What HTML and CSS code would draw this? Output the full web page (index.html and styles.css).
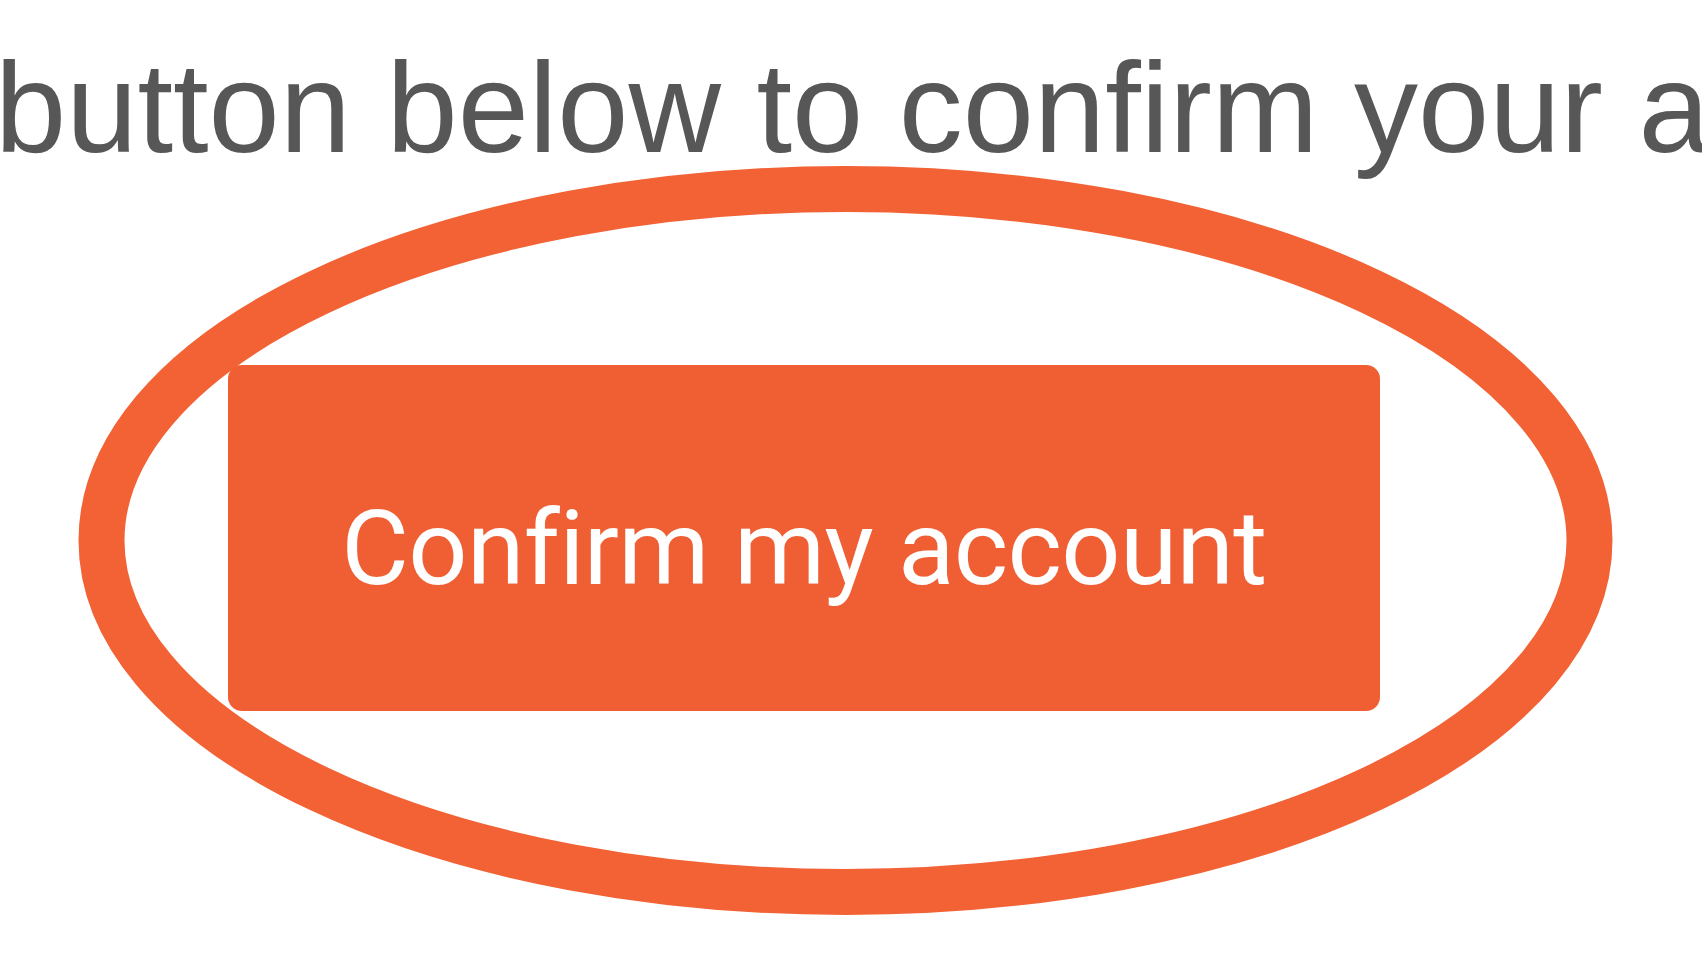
FILE: index.html
```html
<!DOCTYPE html>
<html lang="en">
<head>
<meta charset="utf-8">
<title>Confirm my account</title>
<link rel="stylesheet" href="styles.css">
</head>
<body>
<main class="page">
  <p class="lead">button below to confirm your account</p>
  <a class="confirm-btn" href="#">Confirm my account</a>
  <svg class="highlight" width="1702" height="960" viewBox="0 0 1702 960" aria-hidden="true">
    <ellipse cx="845.5" cy="540.5" rx="744" ry="351.5" fill="none" stroke="#f26235" stroke-width="46"/>
  </svg>
</main>
</body>
</html>
```

FILE: styles.css
```css
html, body {
  margin: 0;
  padding: 0;
  background: #ffffff;
  overflow: hidden;
}

.page {
  position: relative;
  width: 1702px;
  height: 960px;
  overflow: hidden;
}

.lead {
  margin: 0 0 0 -5px;
  padding-top: 44px;
  font-family: "Liberation Sans", Arial, sans-serif;
  font-size: 128px;
  line-height: 128px;
  color: #575757;
  white-space: nowrap;
}

.confirm-btn {
  display: flex;
  align-items: center;
  justify-content: center;
  box-sizing: border-box;
  width: 1152px;
  height: 346px;
  margin: 193px 0 0 228px;
  padding-top: 20px;
  background: #f05f33;
  border-radius: 14px;
  color: #ffffff;
  text-decoration: none;
  font-family: Roboto, "Liberation Sans", sans-serif;
  font-size: 104px;
  letter-spacing: -0.7px;
  white-space: nowrap;
}

.highlight {
  position: absolute;
  left: 0;
  top: 0;
  pointer-events: none;
}
```
